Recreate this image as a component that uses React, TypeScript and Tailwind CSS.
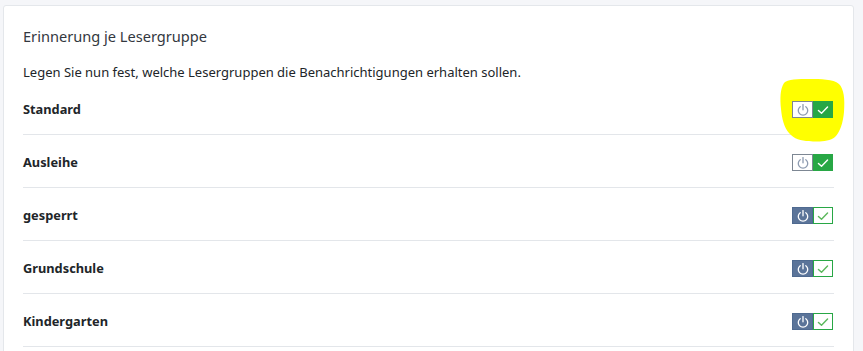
import React from "react";

const PowerIcon = ({ color }: { color: string }) => (
  <svg width="14" height="14" viewBox="0 0 16 16" fill="none" stroke={color} strokeWidth="1.5" strokeLinecap="round">
    <path d="M4.8 4.2 A5.4 5.4 0 1 0 11.2 4.2" />
    <path d="M8 1.8 V7.8" />
  </svg>
);

const CheckIcon = ({ color }: { color: string }) => (
  <svg width="14" height="14" viewBox="0 0 16 16" fill="none" stroke={color} strokeWidth="1.6" strokeLinecap="round" strokeLinejoin="round">
    <path d="M2.8 8.6 L6.3 11.8 L13.2 4.6" />
  </svg>
);

const Toggle = ({ on }: { on: boolean }) =>
  on ? (
    <div className="relative z-10 flex h-[17px]">
      <div className="flex h-[17px] w-[21px] items-center justify-center border border-[#7d8793] bg-white">
        <PowerIcon color="#8d9bb0" />
      </div>
      <div className="flex h-[17px] w-[20px] items-center justify-center border border-[#28a745] bg-[#28a745]">
        <CheckIcon color="#ffffff" />
      </div>
    </div>
  ) : (
    <div className="relative z-10 flex h-[17px]">
      <div className="flex h-[17px] w-[21px] items-center justify-center border border-[#4f6a90] bg-[#5b7499]">
        <PowerIcon color="#ffffff" />
      </div>
      <div className="flex h-[17px] w-[20px] items-center justify-center border border-[#28a745] bg-white">
        <CheckIcon color="#5cb85c" />
      </div>
    </div>
  );

const Highlight = () => (
  <svg
    className="pointer-events-none absolute left-[-12px] top-[-23px] z-0"
    width="65"
    height="64"
    viewBox="781 79 65 64"
  >
    <path
      d="M785 84 C788 80 800 80 810 80 C822 80 834 80 840 85 C845 90 846 100 845 113 C844 124 841 133 836 138 C830 143 818 143 810 142 C802 142 795 140 790 134 C785 128 783 120 782 110 C781 100 781 90 785 84 Z"
      fill="#ffff00"
    />
  </svg>
);

const rows: { name: string; on: boolean }[] = [
  { name: "Standard", on: true },
  { name: "Ausleihe", on: true },
  { name: "gesperrt", on: false },
  { name: "Grundschule", on: false },
  { name: "Kindergarten", on: false },
];

export default function App() {
  return (
    <div
      className="h-[351px] w-[863px] overflow-hidden bg-[#f5f6f9] pl-[3px] pt-[5px]"
      style={{ fontFamily: '"Noto Sans", "Open Sans", sans-serif' }}
    >
      <div className="h-[360px] w-[851px] rounded-[3px] border border-[#e4e7eb] bg-white px-[19px] pt-[19px]">
        <div className="text-[14.6px] leading-[22px] text-[#333840]">Erinnerung je Lesergruppe</div>
        <div className="mt-[16px] text-[13px] leading-[19px] text-[#212529]">
          Legen Sie nun fest, welche Lesergruppen die Benachrichtigungen erhalten sollen.
        </div>
        <div className="flex flex-col">
          {rows.map((r, i) => (
            <div key={r.name} className="flex h-[53px] items-center justify-between border-b border-[#e3e6ea] pt-[3px]">
              <span className="text-[12.8px] font-bold text-[#212529]">{r.name}</span>
              <div className="relative mr-[1px]">
                {i === 0 && <Highlight />}
                <Toggle on={r.on} />
              </div>
            </div>
          ))}
        </div>
      </div>
    </div>
  );
}
